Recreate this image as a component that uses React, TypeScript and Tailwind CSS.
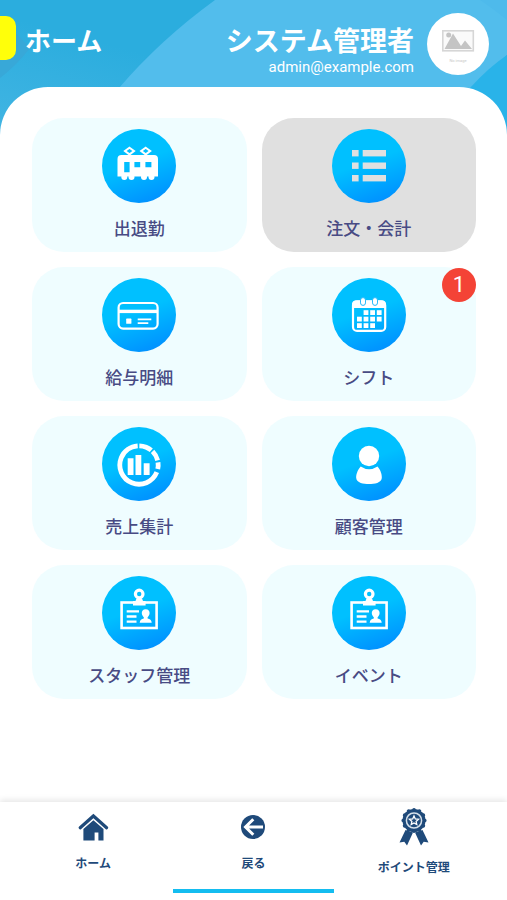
import type { ReactNode } from 'react';

const INK = '#1f4a7a';

function TrainIcon() {
  return (
    <g>
      <g fill="none" stroke="#fff" strokeWidth="2">
        <path d="M27.500 18.800 32 22 27.500 25.400 23 22Z M43.700 18.800 48.200 22 43.700 25.400 39.200 22Z" />
      </g>
      <path
        fill="#fff"
        fillRule="evenodd"
        d="M19.5 26H52q4 0 4 4V47.500H15.500V30q0-4 4-4Z M22.200 33V43.300H27.600V33Z M32.400 33V38.300H38.200V33Z M43.400 33V38.300H49.400V33Z"
      />
      <g fill="#fff">
        <circle cx="22.300" cy="48" r="3" />
        <circle cx="29.500" cy="48" r="3" />
        <circle cx="42" cy="48" r="3" />
        <circle cx="49.500" cy="48" r="3" />
      </g>
    </g>
  );
}

function ListIcon() {
  return (
    <g fill="#e0e0e0">
      {[21, 33.5, 46].map((y) => (
        <g key={y}>
          <rect x="20" y={y} width="6.600" height="6.400" />
          <rect x="30.700" y={y} width="23.300" height="6.400" />
        </g>
      ))}
    </g>
  );
}

function CardIcon() {
  return (
    <g>
      <rect x="16.600" y="25" width="39" height="25.600" rx="4.500" fill="none" stroke="#fff" strokeWidth="2.200" />
      <rect x="16.500" y="31.700" width="39" height="3.400" fill="#fff" />
      <rect x="24.200" y="40.600" width="5.200" height="5.200" rx="0.600" fill="#fff" />
      <path d="M35.700 41.300H49.300M35.700 45.200H46.300" stroke="#fff" strokeWidth="1.800" />
    </g>
  );
}

function CalendarIcon() {
  const cells = [
    [1, 0], [2, 0], [3, 0],
    [0, 1], [1, 1], [2, 1], [3, 1],
    [0, 2], [1, 2], [2, 2],
  ];
  return (
    <g>
      <rect x="21" y="23.400" width="32.200" height="29.500" rx="4" fill="none" stroke="#fff" strokeWidth="2.200" />
      <path d="M20 30V26.500q0-4 4-4H50q4 0 4 4V30Z" fill="#fff" />
      <rect x="28.500" y="19.600" width="5" height="7.800" rx="2.500" fill="#fff" stroke="#20b8fb" strokeWidth="1" />
      <rect x="40.500" y="19.600" width="5" height="7.800" rx="2.500" fill="#fff" stroke="#20b8fb" strokeWidth="1" />
      {cells.map(([c, r]) => (
        <rect key={`${c}-${r}`} x={25 + c * 6.6} y={32.2 + r * 6.5} width="4.800" height="4.800" fill="#fff" />
      ))}
    </g>
  );
}

function ChartIcon() {
  return (
    <g>
      <circle
        cx="37"
        cy="38"
        r="19.200"
        fill="none"
        stroke="#fff"
        strokeWidth="4.800"
        pathLength={360}
        strokeDasharray="244 5 39 5 31 6 20 10"
        transform="rotate(22 37 38)"
      />
      <path d="M25.700 31.300H31.500V48H25.700Z M33.500 28H39.300V48H33.500Z M41.700 36.300H47.600V48H41.700Z" fill="#fff" />
    </g>
  );
}

function PersonIcon() {
  return (
    <g fill="#fff">
      <circle cx="37" cy="29" r="10.200" />
      <path d="M28.700 39.500Q37 45 45.500 39.500C49 43.500 50 48 49.800 51C49.300 56 42.500 57 37 57S24.700 56 24.200 51C24 48 25.200 43.500 28.700 39.500Z" />
    </g>
  );
}

function BadgeIcon() {
  return (
    <g>
      <rect x="19.600" y="26.500" width="35" height="25.500" fill="none" stroke="#fff" strokeWidth="2.600" />
      <circle cx="37.200" cy="18" r="3.800" fill="none" stroke="#fff" strokeWidth="3.200" />
      <path d="M34.500 22.500H40L41 25H43.600V29.400H31V25H33.500Z" fill="#fff" />
      <path d="M24.700 35.400H37M24.700 40.500H34.500M24.700 45.600H34.500" stroke="#fff" strokeWidth="2.400" />
      <path
        d="M43.700 33.200C46.400 33.200 47.800 35 47.600 37.300C47.500 39.200 46.500 40.300 45.600 41.200V42.500C48 43 49.500 43.800 49.700 46.800H37.700C37.900 43.800 39.400 43 41.800 42.500V41.200C40.900 40.300 39.900 39.200 39.800 37.300C39.600 35 41 33.200 43.700 33.200Z"
        fill="#fff"
      />
    </g>
  );
}

function HomeIcon() {
  return (
    <svg viewBox="0 0 32 32" className="size-8" aria-hidden="true">
      <path d="M3.200 16.800 16.400 5 29.600 16.800" fill="none" stroke={INK} strokeWidth="3.200" strokeLinecap="round" />
      <path d="M16.400 9.200 26.500 18V29.400H21.400V21.600H17.600V29.400H6.400V18Z" fill={INK} />
    </svg>
  );
}

function BackIcon() {
  return (
    <svg viewBox="0 0 32 32" className="size-8" aria-hidden="true">
      <circle cx="16" cy="16" r="12" fill={INK} />
      <path d="M26 16H8.500M16.300 8.200 8.500 16 16.300 23.800" fill="none" stroke="#fff" strokeWidth="3" />
    </svg>
  );
}

function RosetteIcon() {
  return (
    <svg viewBox="0 0 40 40" className="size-10" aria-hidden="true">
      <path d="M11.500 23 5.500 35.500 10.300 34.700 13 38.500 19 25.500Z M28.500 23 34.500 35.500 29.700 34.700 27 38.500 21 25.500Z" fill={INK} />
      <circle cx="20" cy="13.500" r="11.500" fill={INK} />
      <circle
        cx="20"
        cy="13.500"
        r="10.800"
        fill="none"
        stroke={INK}
        strokeWidth="3.600"
        strokeLinecap="round"
        pathLength={120}
        strokeDasharray="0.100 9.900"
      />
      <circle cx="20" cy="13.500" r="7.600" fill="none" stroke="#d5e0ea" strokeWidth="1.500" />
      <path
        d="M20 9 21.300 12 24.500 12.300 22.100 14.400 22.800 17.500 20 15.900 17.200 17.500 17.900 14.400 15.500 12.300 18.700 12Z"
        fill={INK}
        stroke="#fff"
        strokeWidth="1.300"
      />
    </svg>
  );
}

type Tile = { label: string; icon: ReactNode; selected?: boolean; count?: number };

const tiles: Tile[] = [
  { label: '出退勤', icon: <TrainIcon /> },
  { label: '注文・会計', icon: <ListIcon />, selected: true },
  { label: '給与明細', icon: <CardIcon /> },
  { label: 'シフト', icon: <CalendarIcon />, count: 1 },
  { label: '売上集計', icon: <ChartIcon /> },
  { label: '顧客管理', icon: <PersonIcon /> },
  { label: 'スタッフ管理', icon: <BadgeIcon /> },
  { label: 'イベント', icon: <BadgeIcon /> },
];

function MenuTile({ label, icon, selected, count }: Tile) {
  return (
    <button
      type="button"
      className={`relative flex flex-col items-center gap-[13px] rounded-[32px] pt-[11px] pb-[10px] ${selected ? 'bg-[#e0e0e0]' : 'bg-[#effdff]'}`}
    >
      <span className="size-[74px] rounded-full bg-linear-160 from-[#00c0ff] from-45% to-[#0a86ff]">
        <svg viewBox="0 0 74 74" className="size-full" aria-hidden="true">
          {icon}
        </svg>
      </span>
      <span className="text-[17px] leading-[26px] font-medium text-[#484b84]">{label}</span>
      {count !== undefined && (
        <span className="absolute top-px right-0 flex size-[34px] items-center justify-center rounded-full bg-[#f44336] font-[Roboto,sans-serif] text-[22px] leading-none text-white">
          {count}
        </span>
      )}
    </button>
  );
}

const tabs = [
  { label: 'ホーム', icon: <HomeIcon />, active: false },
  { label: '戻る', icon: <BackIcon />, active: true },
  { label: 'ポイント管理', icon: <RosetteIcon />, active: false },
];

export default function App() {
  return (
    <div className="relative isolate flex min-h-screen flex-col bg-white font-[Roboto,'Noto_Sans_CJK_JP',sans-serif]">
      <svg
        viewBox="0 0 507 140"
        preserveAspectRatio="none"
        className="absolute inset-x-0 top-0 -z-10 h-[140px] w-full"
        aria-hidden="true"
      >
        <defs>
          <linearGradient id="sky" x1="0" y1="1" x2="1" y2="0">
            <stop offset="0" stopColor="#43b5e3" />
            <stop offset="0.450" stopColor="#2badde" />
            <stop offset="1" stopColor="#2badde" />
          </linearGradient>
        </defs>
        <rect width="507" height="140" fill="url(#sky)" />
        <path d="M0 78Q16 66 30 48L0 16Z" fill="#38a8d8" />
        <path d="M215 0Q160 40 119 88V140H420L507 55V0Z" fill="#52bdec" />
        <path d="M507 0V20Q495 10 480 0Z" fill="#4ebaeb" />
        <path d="M507 55Q488 68 470 88V140H507Z" fill="#29b3e9" />
      </svg>

      <header className="flex h-[87px] items-start pr-[18px] text-white">
        <button type="button" aria-label="メニュー" className="mt-4 h-11 w-4 rounded-r-[10px] bg-[#ffff0a]" />
        <h1 className="mt-[22px] ml-[9px] text-[26px] leading-[40px] font-bold">ホーム</h1>
        <div className="mt-[22px] ml-auto text-right">
          <p className="text-[27px] leading-[40px] font-bold">システム管理者</p>
          <p className="-mt-1 text-[15px] leading-[18px]">admin@example.com</p>
        </div>
        <svg viewBox="0 0 62 62" className="mt-[13px] ml-[13px] size-[62px]" role="img" aria-label="No image">
          <circle cx="31" cy="31" r="31" fill="#fff" />
          <rect x="15.800" y="17.800" width="30.500" height="20" fill="#fafafa" stroke="#d6d6d6" strokeWidth="1.600" />
          <circle cx="21.700" cy="21.900" r="2.500" fill="#c4c4c4" />
          <path d="M17.500 36 26 20.500 34 33 38 27.500 45 36Z" fill="#c4c4c4" />
          <text x="31" y="48.500" textAnchor="middle" fontSize="4" fill="#c8c8c8">
            No image
          </text>
        </svg>
      </header>

      <main className="flex-1 rounded-t-[48px] bg-white pt-[31px] pr-[31px] pb-8 pl-8">
        <div className="grid grid-cols-2 gap-[15px]">
          {tiles.map((tile) => (
            <MenuTile key={tile.label} {...tile} />
          ))}
        </div>
      </main>

      <nav className="grid grid-cols-3 bg-white px-[13px] pb-[7px] shadow-[0_-2px_6px_rgba(0,0,0,0.1)]">
        {tabs.map((tab) => (
          <button
            key={tab.label}
            type="button"
            className={`flex h-[91px] flex-col items-center justify-center gap-[13px] border-b-4 pb-[8px] ${tab.active ? 'border-[#14bdf0]' : 'border-transparent'}`}
          >
            {tab.icon}
            <span className="text-[12px] leading-[16px] font-bold text-[#1f4a7a]">{tab.label}</span>
          </button>
        ))}
      </nav>
    </div>
  );
}
